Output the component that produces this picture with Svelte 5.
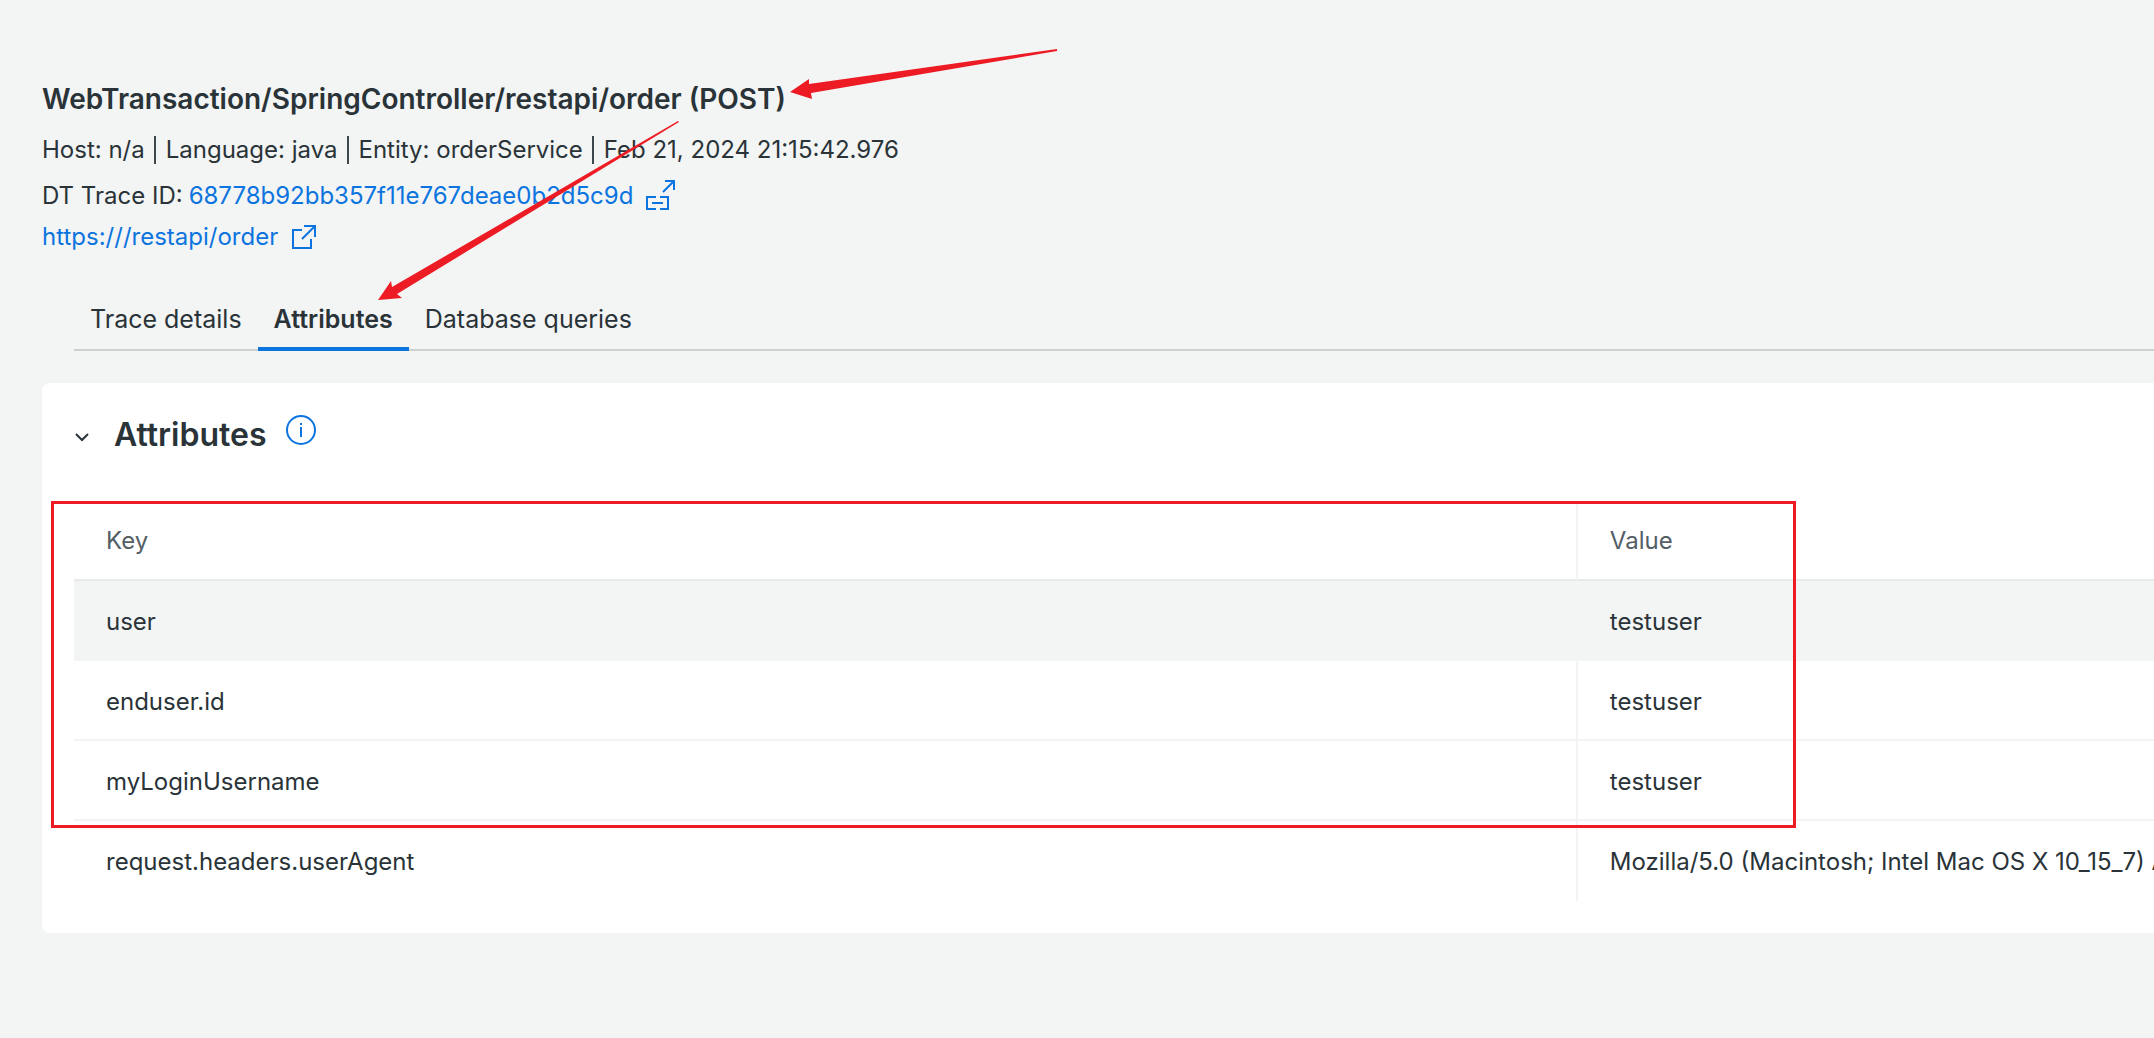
<script lang="ts">
  const tabs = ['Trace details', 'Attributes', 'Database queries'];
  let active = $state('Attributes');
  let open = $state(true);

  const rows = [
    { key: 'user', value: 'testuser' },
    { key: 'enduser.id', value: 'testuser' },
    { key: 'myLoginUsername', value: 'testuser' },
    {
      key: 'request.headers.userAgent',
      value: 'Mozilla/5.0 (Macintosh; Intel Mac OS X 10_15_7) A',
    },
  ];
</script>

<main>
  <header>
    <h1>WebTransaction/SpringController/restapi/order (POST)</h1>
    <p class="meta">
      <span>Host: n/a</span><i></i><span>Language: java</span><i></i><span>Entity: orderService</span><i></i><span>Feb 21, 2024 21:15:42.976</span>
    </p>
    <p class="trace">
      <span>DT Trace ID:</span>
      <a href="#trace">
        68778b92bb357f11e767deae0b2d5c9d
        <svg width="32" height="32" viewBox="0 0 32 32" aria-hidden="true">
          <path d="M20 1h9v9M29 1L18 12M11 17H2v12h9M15 17h8v12h-8M7 23h11" />
        </svg>
      </a>
    </p>
    <p class="url">
      <a href="#order">
        https:///restapi/order
        <svg width="26" height="26" viewBox="0 0 26 26" aria-hidden="true">
          <path d="M12 6H3v18h18v-9M14 2h11v11M25 2L12 15" />
        </svg>
      </a>
    </p>
  </header>

  <nav>
    {#each tabs as tab}
      <button class="tab" class:active={tab === active} onclick={() => (active = tab)}>{tab}</button>
    {/each}
  </nav>

  <section>
    <div class="head">
      <button class="toggle" aria-label="Toggle attributes" onclick={() => (open = !open)}>
        <svg width="16" height="16" viewBox="0 0 16 16"><path d="M2 5l6 6 6-6" /></svg>
      </button>
      <h2>Attributes</h2>
      <button class="info" aria-label="About attributes">
        <svg width="32" height="32" viewBox="0 0 32 32">
          <circle cx="16" cy="15" r="14" /><path d="M16 12v10M16 8v2" />
        </svg>
      </button>
    </div>

    {#if open}
      <div class="marked">
        <table>
          <thead>
            <tr><th scope="col">Key</th><th scope="col">Value</th></tr>
          </thead>
          <tbody>
            {#each rows as row, n}
              <tr class:hovered={n === 0}><td>{row.key}</td><td>{row.value}</td></tr>
            {/each}
          </tbody>
        </table>
        <div class="frame"></div>
      </div>
    {/if}
  </section>

  <svg class="arrows" width="1100" height="320" viewBox="0 0 1100 320" aria-hidden="true">
    <path d="M790 92L809 79L809 84L1057 49V51L811 93L812 99Z" />
    <path d="M378 300L391 281L392 287L678 121L679 122L397 294L402 298Z" />
  </svg>
</main>

<style>
  :global(body) {
    background: #f3f4f4;
  }
  main {
    position: relative;
    min-height: 100vh;
    box-sizing: border-box;
    padding: 79px 0 40px 42px;
    overflow: hidden;
    font: 24px/32px Inter, 'Liberation Sans', sans-serif;
    color: #293338;
  }
  h1,
  h2,
  p {
    margin: 0;
  }
  h1 {
    font-size: 28px;
    line-height: 40px;
    font-weight: 600;
  }
  .meta {
    display: flex;
    align-items: center;
    margin-top: 15px;
    line-height: 32px;
    white-space: nowrap;
  }
  .meta i {
    width: 2px;
    height: 28px;
    margin: 0 10px 0 9px;
    background: #3e474c;
  }
  .trace {
    display: flex;
    gap: 6px;
    margin-top: 14px;
  }
  a {
    display: inline-flex;
    align-items: center;
    color: #0c74df;
    text-decoration: none;
  }
  a svg {
    margin-left: 12px;
    overflow: visible;
  }
  .url {
    margin-top: 9px;
  }
  svg {
    fill: none;
    stroke: currentColor;
    stroke-width: 2;
  }
  nav {
    display: flex;
    margin: 50px 0 0 32px;
    box-shadow: inset 0 -2px #cdd0d2;
  }
  button {
    padding: 0;
    border: 0;
    background: none;
    font: inherit;
    color: inherit;
    cursor: pointer;
  }
  .tab {
    height: 48px;
    padding: 0 16px 12px;
    border-bottom: 4px solid transparent;
    font-size: 25px;
    white-space: nowrap;
  }
  .tab.active {
    border-color: #0c74df;
    font-weight: 600;
  }
  section {
    margin-top: 32px;
    padding: 32px 0 32px 32px;
    background: #fff;
    border-radius: 8px 0 0 8px;
  }
  .head {
    display: flex;
    align-items: flex-start;
    height: 56px;
    margin-bottom: 30px;
  }
  .toggle {
    display: flex;
    margin: 14px 24px 0 0;
  }
  h2 {
    font-size: 32px;
    line-height: 40px;
    font-weight: 600;
  }
  .info {
    display: flex;
    margin-left: 18px;
    color: #0c74df;
  }
  .marked {
    position: relative;
  }
  table {
    width: 100%;
    table-layout: fixed;
    border-collapse: separate;
    border-spacing: 0;
  }
  th,
  td {
    box-sizing: border-box;
    height: 80px;
    padding: 2px 32px 0;
    border-bottom: 2px solid #f3f4f4;
    text-align: left;
    font-weight: 400;
    white-space: nowrap;
  }
  td {
    padding-top: 4px;
  }
  td:last-child {
    padding-right: 0;
  }
  th:first-child,
  td:first-child {
    width: 72.3%;
    border-right: 2px solid #f3f4f4;
  }
  th {
    color: #535e65;
    border-bottom-color: #e7e9ea;
  }
  .hovered td {
    background: #f3f4f4;
  }
  tbody tr:last-child td {
    padding-top: 2px;
    border-bottom: 0;
  }
  .frame {
    position: absolute;
    top: 0;
    left: -23px;
    width: 83.9%;
    height: 327px;
    box-sizing: border-box;
    border: 3px solid #ed1c24;
    pointer-events: none;
  }
  .arrows {
    position: absolute;
    top: 0;
    left: 0;
    fill: #ed1c24;
    stroke: none;
    pointer-events: none;
  }
</style>
